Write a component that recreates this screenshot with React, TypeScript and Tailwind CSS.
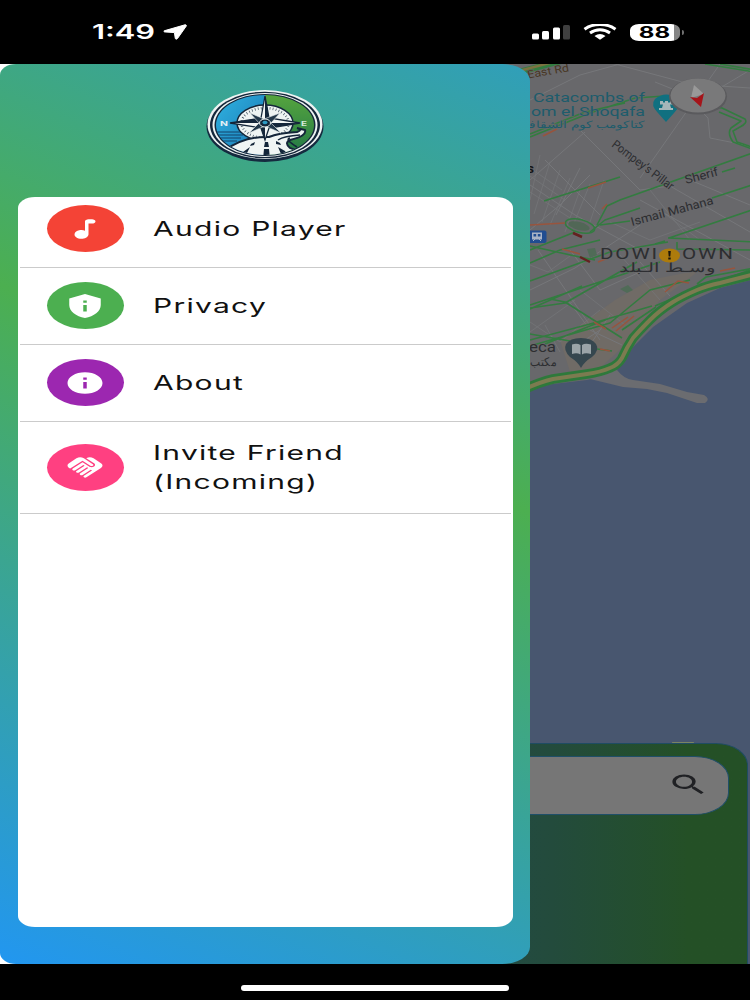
import type { ReactNode } from "react";
import { MdHandshake, MdInfo, MdPrivacyTip } from "react-icons/md";

function StatusBar() {
  return (
    <header className="flex h-16 shrink-0 items-center justify-between bg-black pr-[66px] pl-[92px] text-white">
      <div className="flex items-center">
        <span className="w-[71px] text-[20px] leading-none font-semibold">
          <span className="inline-block origin-left scale-x-[1.54]">1:49</span>
        </span>
        <svg className="h-[16px] w-[24px]" viewBox="0 0 24 16" fill="currentColor" stroke="currentColor" strokeWidth="1" strokeLinejoin="round">
          <path d="M22 .8 1.200 6.800Q.4 7.400 1.500 7.900L11.400 8.600 12.300 14.600Q13.200 15.800 14.500 14.500L23.300 2Q23.500.6 22 .8Z" />
        </svg>
      </div>
      <div className="flex items-center">
        <svg className="h-[17px] w-[40px]" viewBox="0 0 40 17">
          <rect x="1" y="9.500" width="7" height="6" rx="1.500" fill="#fff" />
          <rect x="11" y="7" width="7" height="8.500" rx="1.500" fill="#fff" />
          <rect x="22" y="3.500" width="7" height="12" rx="1.500" fill="#fff" />
          <rect x="32" y="1" width="7" height="14.500" rx="1.500" fill="#3f3f3f" />
        </svg>
        <svg className="ml-[12px] h-[17px] w-[34px]" viewBox="0 0 34 17" fill="none" stroke="#fff" strokeWidth="3">
          <path d="M1.500 5.200C10-1 24-1 32.500 5.200" />
          <path d="M7 9C13 4.600 21 4.600 27 9" />
          <path d="M11.500 11.900Q17 8.200 22.500 11.900L17 15.800Z" fill="#fff" stroke="none" />
        </svg>
        <div className="ml-[13px] flex h-[17px] w-[50px] items-center justify-center rounded-[9px/6px] bg-gradient-to-r from-white from-88% to-[#858585] to-88% pr-[2px] text-[16px] leading-none font-bold text-black">
          <span className="inline-block scale-x-[1.5]">88</span>
        </div>
        <div className="ml-[2px] h-[5px] w-[2px] rounded-r-full bg-[#707070]" />
      </div>
    </header>
  );
}

function Logo() {
  return (
    <svg className="h-[74px] w-[118px]" viewBox="0 0 118 74">
      <defs>
        <linearGradient id="sky" x1="0" y1="0" x2="1" y2="1">
          <stop offset="0" stopColor="#31b5e3" />
          <stop offset="1" stopColor="#1673b0" />
        </linearGradient>
        <linearGradient id="land" x1="0" y1="0" x2="0" y2="1">
          <stop offset="0" stopColor="#57a63e" />
          <stop offset="1" stopColor="#1f7547" />
        </linearGradient>
        <clipPath id="disc">
          <ellipse cx="59" cy="36" rx="49" ry="30" />
        </clipPath>
      </defs>
      <ellipse cx="59" cy="37.500" rx="58.500" ry="35.500" fill="#152a3f" />
      <ellipse cx="59" cy="35.500" rx="57.500" ry="34.500" fill="#eef4f3" />
      <ellipse cx="59" cy="36" rx="55" ry="33.300" fill="#14263a" />
      <ellipse cx="59" cy="36" rx="52.500" ry="32" fill="#eef4f3" />
      <ellipse cx="59" cy="36" rx="50.500" ry="31" fill="#14263a" />
      <g clipPath="url(#disc)">
        <rect x="8" y="4" width="51" height="66" fill="url(#sky)" />
        <rect x="59" y="4" width="52" height="66" fill="url(#land)" />
        <path d="M9 43H38M9 46H37M11 49H35M13 52H31" stroke="#12436b" strokeWidth="1.200" />
        <ellipse cx="59" cy="34" rx="28" ry="18" fill="#eef4f3" stroke="#14263a" strokeWidth="1.500" />
        <ellipse cx="59" cy="34" rx="23.500" ry="15" fill="none" stroke="#3c4d5c" strokeWidth="2.500" strokeDasharray=".7 2.300" />
        <path d="M18 62Q38 47 63 48 72 44 91 43 97 41 91 39L99 41Q101 47 84 51 78 54 84 59L97 64 80 76H30Z" fill="#f0f5f4" stroke="#14263a" strokeWidth="2" />
        <path d="M72 51Q78 47 94 46M91 58Q78 50 84 49" fill="none" stroke="#14263a" strokeWidth="1.500" />
        <path d="M49 53 45 55 44 57 48 56ZM44 58 37 63 35 68 41 64ZM59 53H62L63 58H58ZM58 60H63L64 70H57ZM70 52 74 54 75 56 70 55ZM72 58 79 62 82 67 75 65Z" fill="#14263a" />
      </g>
      <path d="M59 7 63 29 94 34 63 39 59 51 55 39 24 34 55 29Z" fill="#f3f6f5" stroke="#14263a" strokeWidth="1.300" />
      <path d="M59 7 63 29 59 34ZM94 34 63 39 59 34ZM59 51 55 39 59 34ZM24 34 55 29 59 34Z" fill="#14263a" />
      <path d="M44 24 58 30 74 24 65 34 75 44 59 37 43 44 53 34Z" fill="#22384a" stroke="#e9efef" strokeWidth=".6" />
      <ellipse cx="59" cy="34" rx="5.500" ry="4" fill="#14263a" stroke="#e9efef" />
      <ellipse cx="59" cy="33.500" rx="2.500" ry="1.800" fill="#2d9ac4" />
      <text x="14" y="36.500" fontSize="6.500" fontWeight="700" fontFamily="Inter, sans-serif" fill="#e4f1f5" textLength="8" lengthAdjust="spacingAndGlyphs">N</text>
      <text x="95" y="36.500" fontSize="6.500" fontWeight="700" fontFamily="Inter, sans-serif" fill="#d6eadc" textLength="6" lengthAdjust="spacingAndGlyphs">E</text>
    </svg>
  );
}

function MenuRow({ color, icon, tall, children }: { color: string; icon: ReactNode; tall?: boolean; children: ReactNode }) {
  return (
    <li className={`mx-[2px] flex shrink-0 items-center border-b border-[#cbcbcb] pl-[27px] ${tall ? "h-[92px]" : "h-[77px]"}`}>
      <span className={`flex h-[47px] w-[77px] shrink-0 items-center justify-center rounded-[50%] text-white ${tall ? "" : "mb-[1px]"} ${color}`}>{icon}</span>
      <span className="ml-[29px] w-[160px] origin-left scale-x-[1.5] text-[20px] leading-[29px] tracking-[0.85px] text-[#111]">{children}</span>
    </li>
  );
}

function Drawer() {
  return (
    <aside className="absolute inset-y-0 left-0 flex w-[530px] flex-col items-center rounded-[16px_28px_28px_16px/11px_17px_17px_11px] bg-[linear-gradient(203.3deg,#2196f3_-21.4%,#4caf50_39.8%,#2196f3_101%)] pt-[25px] pb-[37px]">
      <Logo />
      <ul className="mt-[34px] flex w-[495px] flex-1 flex-col overflow-hidden rounded-[17px/11px] bg-white">
        <li className="-mt-[6px]" />
        <MenuRow
          color="bg-[#f44336]"
          icon={
            <svg className="h-[26px] w-[42px]" viewBox="0 0 24 24" preserveAspectRatio="none" fill="currentColor">
              <path d="M12 5v8.550c-.94-.54-2.100-.75-3.330-.32-1.340.48-2.370 1.670-2.610 3.070-.46 2.740 1.860 5.080 4.590 4.650 1.960-.31 3.350-2.110 3.350-4.100V7h2c1.100 0 2-.9 2-2s-.9-2-2-2h-2c-1.100 0-2 .9-2 2z" />
            </svg>
          }
        >
          Audio Player
        </MenuRow>
        <MenuRow color="bg-[#4caf50]" icon={<MdPrivacyTip className="h-[26px] w-[42px]" preserveAspectRatio="none" />}>
          Privacy
        </MenuRow>
        <MenuRow color="bg-[#9c27b0]" icon={<MdInfo className="h-[26px] w-[42px]" preserveAspectRatio="none" />}>
          About
        </MenuRow>
        <MenuRow tall color="bg-[#ff4081]" icon={<MdHandshake className="h-[27px] w-[42px]" preserveAspectRatio="none" />}>
          Invite Friend
          <br />
          (Incoming)
        </MenuRow>
      </ul>
    </aside>
  );
}

const COAST = "M755 274 720 283Q706 286 697 290 683 296 673 302 660 310 650 320 640 330 633 338 627 347 622 358 618 365 610 368 601 372 587 374L553 379Q540 382 525 389";

function StreetMap() {
  return (
    <svg className="absolute inset-y-0 right-0 h-[900px] w-[260px]" viewBox="490 64 260 900" fontFamily="Roboto, 'Noto Sans', sans-serif">
      <rect x="490" y="64" width="260" height="900" fill="#68686b" />
      <path d="M560 340 615 300 650 280 700 270 660 300 625 345 600 368 570 372Z" fill="#706b66" />
      <g fill="none" stroke="#76777a" strokeWidth="1">
        <path d="M530 100 580 75 620 64M580 130 640 190 670 186 750 232M655 82 700 100 750 70M530 185 575 215 640 250M545 160 600 215M556 215 580 168M585 132 530 180M640 178 720 64M690 100 708 118 710 138 750 146M530 230 560 205 590 175M600 60 690 84 750 88M570 250 600 290 640 272M538 250 600 340M530 290 575 268 640 225M640 200 750 260M690 180 750 205" />
        <path d="M530 168 562 190M530 176 565 200M530 192 570 218M540 155 530 200M550 162 534 214M560 170 542 222M570 178 550 225M580 190 565 232M590 184 572 228M604 180 590 222M530 322 560 342 600 310M530 332 575 300M545 325 560 352M580 290 625 325M620 255 660 300M650 190 690 240M665 214 700 240M530 265 548 272 570 256M610 222 650 240 700 222" strokeWidth=".7" />
        <path d="M568 300 590 330 622 345M600 330 570 350M610 315 590 345M640 262 670 296" />
      </g>
      <path d="M490 398 553 384 587 380 610 375Q617 371 620 366L633 347 653 327 687 303 720 288 755 279V964H490Z" fill="#48566f" />
      <path d="M590 379 617 370Q624 379 633 380L660 384 687 392 704 395Q711 399 705 403L697 403 667 393 647 389 623 387Z" fill="#6b6c70" />
      <g fill="none" stroke="#337c40" strokeWidth="1.600" strokeLinejoin="round">
        <path d="M530 134 585 112 625 103M530 137 590 113 635 98 665 96 690 104 722 108 745 119Q748 123 740 127L733 131 737 142 755 148" />
        <path d="M719 112 741 121 731 128Q727 133 733 142L752 149M705 64 755 72M720 64 755 70" />
        <path d="M544 201 620 177M597 225 607 206 620 200 755 152M600 225 630 221M722 172 735 168M712 198 755 184M590 232 605 220 640 208M530 250 575 232M669 238 755 209M668 238 755 242M677 242 677 249 755 250M665 241 655 244" />
        <path d="M530 246 575 256 595 260M530 263 560 250 600 240M530 281 610 252 668 242M530 308 565 303 637 262M530 309 582 286M530 305 660 262M550 299 565 302 622 338M530 346 610 323 650 290 690 280M530 340 590 324 652 306M530 334 570 341M545 344 610 318M622 330 656 307M597 349 612 351M655 306 688 292 750 270M697 284 706 277 755 268" />
        <ellipse cx="580" cy="226" rx="15" ry="6.500" transform="rotate(14 580 226)" />
      </g>
      <path d="M515 73 565 60" stroke="#337c40" strokeWidth="6" />
      <path d="M515 72 565 59" stroke="#7c7240" strokeWidth="2.500" />
      <g fill="none" stroke="#98543d" strokeWidth="1.500">
        <path d="M543 136 557 129M588 188 606 182M602 209 607 204M530 225 565 223M562 249 580 254M594 322 606 329M612 328 628 317M616 331 634 316M665 292 678 281 689 283M598 262 608 258M720 271 735 268M600 349 610 351" />
      </g>
      <path d="M573 233 582 237M580 257 590 262" stroke="#64211f" strokeWidth="2.500" />
      <ellipse cx="579" cy="226" rx="11" ry="4" fill="#516756" transform="rotate(14 579 226)" />
      <path d="M620 289 628 285 633 290 627 293ZM587 249 595 248 597 255 590 258Z" fill="#506b57" />
      <path d={COAST} fill="none" stroke="#2e793b" strokeWidth="9.500" />
      <path d={COAST} fill="none" stroke="#7c7b50" strokeWidth="4" />

      <g fill="#1d5c6c" fontSize="13" stroke="#68686b" strokeWidth="1" paintOrder="stroke">
        <text x="533" y="102" textLength="112" lengthAdjust="spacingAndGlyphs">Catacombs of</text>
        <text x="531" y="116" textLength="114" lengthAdjust="spacingAndGlyphs">om el Shoqafa</text>
        <text x="522" y="128" fontSize="10" textLength="123" lengthAdjust="spacingAndGlyphs">كتاكومب كوم الشقافة</text>
      </g>
      <path d="M666 122 658 113Q650 105 655 99 666 90 678 99 682 105 674 113Z" fill="#107080" />
      <path d="M660 101H663V102.500H665V101H668V102.500H670V101H673V104.500H670L671 108H673V110H659V108H662L663 104.500H660Z" fill="#a4b6b9" />
      <ellipse cx="698" cy="96.500" rx="29" ry="18" fill="#5a5a5d" />
      <ellipse cx="698" cy="95.500" rx="27.500" ry="17" fill="#79797a" />
      <path d="M694 85 691 98 704 94Z" fill="#999" />
      <path d="M690 97 697 98 704 93 701 107Z" fill="#a5141a" />

      <g fill="#2d2e31" stroke="#68686b" strokeWidth=".8" paintOrder="stroke" fontSize="12">
        <text transform="translate(528 78.500) rotate(-10)" fill="#493724" fontSize="11" textLength="42" lengthAdjust="spacingAndGlyphs">East Rd</text>
        <text transform="translate(611 146) rotate(37)" textLength="74" lengthAdjust="spacingAndGlyphs">Pompey’s Pillar</text>
        <text transform="translate(686 184) rotate(-15)" textLength="34" lengthAdjust="spacingAndGlyphs">Sherif</text>
        <text transform="translate(632 226) rotate(-15)" textLength="85" lengthAdjust="spacingAndGlyphs">Ismail Mahana</text>
        <text x="527" y="173" fontWeight="700" fill="#151517" textLength="7" lengthAdjust="spacingAndGlyphs">s</text>
        <text x="600" y="258.500" fontSize="14" letterSpacing="1.300" textLength="59" lengthAdjust="spacingAndGlyphs">DOWI</text>
        <text x="682" y="258.500" fontSize="14" letterSpacing="1.300" textLength="53" lengthAdjust="spacingAndGlyphs">OWN</text>
        <text x="619" y="272" fontSize="13" textLength="96" lengthAdjust="spacingAndGlyphs">وسـط الـبلد</text>
        <text x="529" y="352" fontSize="14" textLength="27" lengthAdjust="spacingAndGlyphs">eca</text>
        <text x="530" y="366" textLength="26" lengthAdjust="spacingAndGlyphs">مكتب</text>
      </g>
      <ellipse cx="669.500" cy="255.500" rx="10.500" ry="7" fill="#ad7b0c" />
      <path d="M668.200 251H670.800L670.300 256.500H668.700ZM668.300 257.500H670.700V259.500H668.300Z" fill="#19140b" />
      <rect x="522" y="230.500" width="24.500" height="12.500" rx="2" fill="#214d91" />
      <path fillRule="evenodd" d="M532 232.500H542V239.500H532ZM533.500 234V236.500H536.200V234ZM537.800 234V236.500H540.500V234Z" fill="#a8b3c6" />
      <path d="M533 241 535 239M541 241 539 239" stroke="#a8b3c6" />
      <path d="M581 368Q578 362 570 357 563 350 566 344 570 338 581 338 592 338 596 344 600 350 592 357 584 362 581 368Z" fill="#36474f" />
      <path d="M572 344.500Q577 343 580.500 345V354.500Q577 352.500 572 354ZM582 345Q585 343 591 344.500V354Q585 352.500 582 354.500Z" fill="#9ba4a8" />
    </svg>
  );
}

function SearchSheet() {
  return (
    <section className="relative mt-auto mr-[2px] ml-auto h-[221px] w-[748px] rounded-[32px_32px_0_0/22px_22px_0_0] border-t border-r border-[#1f4c63] bg-gradient-to-r from-[#234760] from-30% via-[#234b3c] via-74% to-[#245026] to-92% pt-[12px] pr-[18px]">
      <div className="ml-auto flex h-[59px] w-[700px] items-center justify-end rounded-[34px/22px] border border-[#1f4f68] bg-[#767676] pr-[18px] pb-[2px]">
        <svg className="h-[27px] w-[43px] text-[#202124]" viewBox="0 0 24 24" preserveAspectRatio="none" fill="currentColor">
          <path d="M15.500 14h-.79l-.28-.27A6.471 6.471 0 0 0 16 9.500 6.500 6.500 0 1 0 9.500 16c1.610 0 3.090-.59 4.230-1.570l.27.28v.79l5 4.990L20.490 19l-4.990-5zm-6 0C7.010 14 5 11.990 5 9.500S7.010 5 9.500 5 14 7.010 14 9.500 11.990 14 9.500 14z" />
        </svg>
      </div>
      <div className="absolute -top-[2px] left-[672px] h-[1px] w-[22px] rounded-full bg-[#7a8462]" />
    </section>
  );
}

export default function App() {
  return (
    <div className="flex h-[1000px] w-[750px] flex-col overflow-hidden bg-black font-[Inter,'Noto_Sans',sans-serif]">
      <StatusBar />
      <main className="relative flex h-[900px] shrink-0 flex-col bg-white">
        <StreetMap />
        <SearchSheet />
        <div className="absolute bottom-0 left-0 h-5 w-4 bg-white" />
        <Drawer />
      </main>
      <footer className="flex flex-1 justify-center bg-black pt-[21px]">
        <div className="h-[6px] w-[268px] rounded-full bg-white" />
      </footer>
    </div>
  );
}
